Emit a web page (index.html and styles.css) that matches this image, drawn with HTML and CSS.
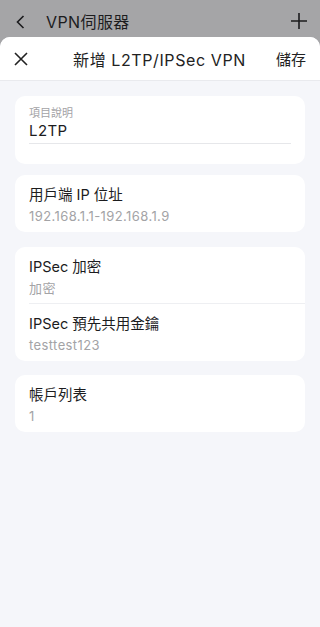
FILE: index.html
```html
<!DOCTYPE html>
<html lang="zh-Hant">
<head>
<meta charset="utf-8">
<link rel="stylesheet" href="styles.css">
</head>
<body>
<div class="backdrop">
  <svg class="ico" width="16" height="16" viewBox="0 0 16 16"><path d="M10.5 2 L4.5 8 L10.5 14" fill="none" stroke="#1c1c1e" stroke-width="1.6"/></svg>
  <span class="bd-title">VPN伺服器</span>
  <svg class="plus" width="18" height="18" viewBox="0 0 18 18"><path d="M9 1 V17 M1 9 H17" fill="none" stroke="#1c1c1e" stroke-width="1.6"/></svg>
</div>
<div class="sheet">
  <div class="header">
    <svg class="close" width="16" height="16" viewBox="0 0 16 16"><path d="M2 2 L14 14 M14 2 L2 14" fill="none" stroke="#222" stroke-width="1.6"/></svg>
    <span class="h-title">新增 L2TP/IPSec VPN</span>
    <span class="save">儲存</span>
  </div>
  <div class="content">
    <div class="card input-card">
      <div class="in-label">項目說明</div>
      <div class="in-value">L2TP</div>
    </div>
    <div class="card c2">
      <div class="row">
        <div class="r-title">用戶端 IP 位址</div>
        <div class="r-value">192.168.1.1-192.168.1.9</div>
      </div>
    </div>
    <div class="card c3">
      <div class="row sep">
        <div class="r-title">IPSec 加密</div>
        <div class="r-value">加密</div>
      </div>
      <div class="row">
        <div class="r-title">IPSec 預先共用金鑰</div>
        <div class="r-value">testtest123</div>
      </div>
    </div>
    <div class="card c4">
      <div class="row">
        <div class="r-title">帳戶列表</div>
        <div class="r-value">1</div>
      </div>
    </div>
  </div>
</div>
</body>
</html>
```
FILE: styles.css
```css
* { box-sizing: border-box; }
html, body { margin: 0; padding: 0; }
body {
  width: 320px;
  height: 627px;
  overflow: hidden;
  background: #a5a5a7;
  font-family: "Inter", "Noto Sans CJK TC", sans-serif;
  color: #1c1c1e;
}
.backdrop {
  height: 37px;
  display: flex;
  align-items: center;
  padding: 6px 12px 0 13px;
}
.backdrop .ico { margin-right: 17px; }
.bd-title { font-size: 16px; flex: 1; margin-top: -1px; letter-spacing: 0.4px; }
.plus { margin-top: -2px; }
.sheet {
  background: #f5f6fa;
  border-radius: 10px 10px 0 0;
  height: 590px;
}
.header {
  height: 44px;
  background: #fff;
  border-radius: 10px 10px 0 0;
  border-bottom: 1px solid #e9eaee;
  display: grid;
  grid-template-columns: 1fr auto 1fr;
  align-items: center;
  padding: 0 14px 0 13px;
}
.close { justify-self: start; }
.h-title { font-size: 16px; color: #222; letter-spacing: 0.6px; }
.save { font-size: 15px; color: #222; justify-self: end; }
.content {
  padding: 15px 15px 0;
  display: flex;
  flex-direction: column;
}
.card {
  background: #fff;
  border-radius: 10px;
}
.c2 { margin-top: 11px; }
.c3 { margin-top: 15px; }
.c4 { margin-top: 14px; }
.input-card {
  height: 68px;
  padding: 10px 14px 0;
}
.in-label { font-size: 11px; color: #a3a3a6; line-height: 15px; }
.in-value {
  font-size: 15px;
  letter-spacing: 0.4px;
  line-height: 20px;
  padding-bottom: 2px;
  border-bottom: 1px solid #e6e7ea;
}
.row {
  height: 57px;
  padding: 10px 14px 0;
}
.row.sep { position: relative; }
.row.sep::after {
  content: "";
  position: absolute;
  left: 14px; right: 0; bottom: 0;
  border-bottom: 1px solid #eeeff2;
}
.r-title { font-size: 14.5px; line-height: 20px; color: #1c1c1e; }
.r-value { font-size: 13px; letter-spacing: 0.4px; line-height: 20px; color: #a3a3a6; margin-top: 1px; }
```
